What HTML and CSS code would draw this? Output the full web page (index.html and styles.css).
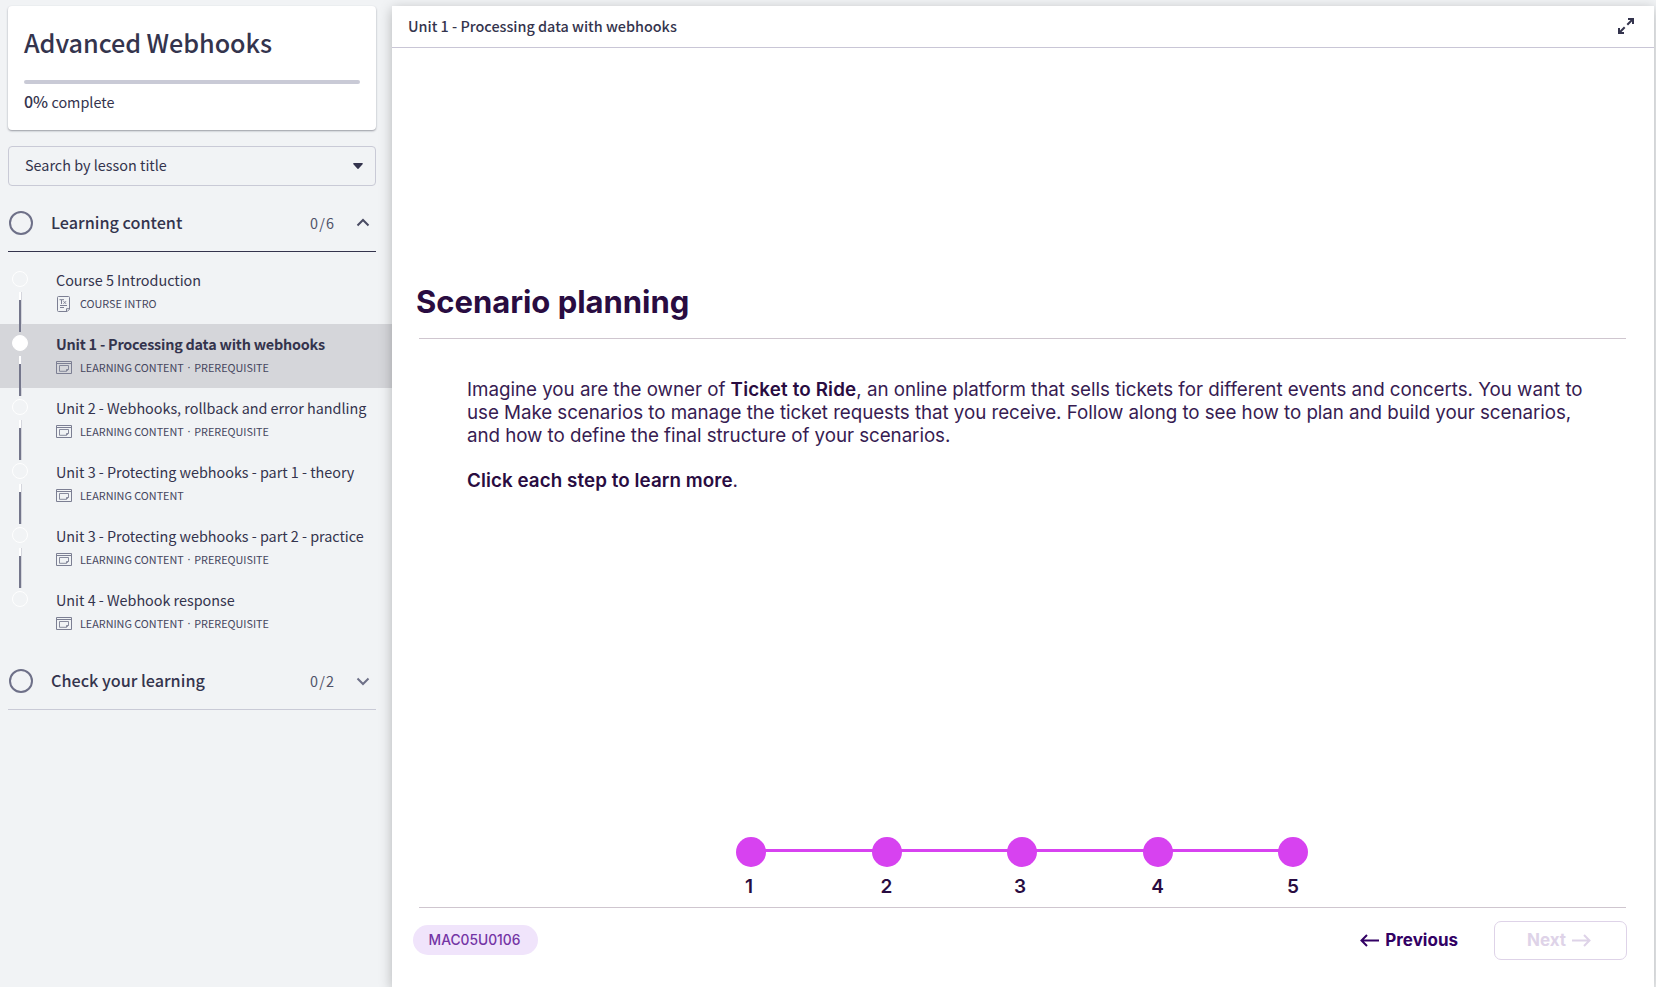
FILE: index.html
```html
<!DOCTYPE html>
<html lang="en">
<head>
<meta charset="utf-8">
<title>Advanced Webhooks</title>
<link rel="stylesheet" href="styles.css">
</head>
<body>
<svg class="defs" width="0" height="0" aria-hidden="true">
  <symbol id="lesson" viewBox="0 0 16 13"><g fill="none" stroke="#7c7f93"><path d="M.5.5h15v12H.5zM.5 2.500h15"/><path d="M3.500 4.500h9v3.800l-2 2h-7zM12.500 8.500h-2v1.800" stroke-width=".9"/></g></symbol>
  <symbol id="intro" viewBox="0 0 13 16"><g fill="none" stroke="#7c7f93"><path d="M1.500.5h10a1 1 0 0 1 1 1v11.700l-2.300 2.300h-8.700a1 1 0 0 1-1-1v-13a1 1 0 0 1 1-1zM9.500 15v-2.300h3M3 9.500h7M3 11.500h4"/><path d="M2.500 3.700H7M4.500 4v4M6.500 5.200l2.500 2.600M9 5.200L6.500 7.800"/></g></symbol>
</svg>
<div class="app">
  <aside class="sidebar">
    <section class="course">
      <h1>Advanced Webhooks</h1>
      <div class="progress"></div>
      <p><b>0%</b> <span>complete</span></p>
    </section>
    <div class="search"><span>Search by lesson title</span><svg width="10" height="6" viewBox="0 0 10 6"><path d="M.9 0h8.200c.7 0 1 .8.500 1.300L5.500 5.700a.7.7 0 0 1-1 0L.4 1.300C-.1.8.200 0 .9 0z" fill="#34344d"/></svg></div>
    <div class="group open">
      <i class="ring"></i><h2>Learning content</h2><span class="count">0/6</span>
      <svg width="14" height="14" viewBox="0 0 14 14"><path d="M1.500 9.500L7 4l5.500 5.500"/></svg>
    </div>
    <ul class="lessons">
      <li><i class="dot"></i><i class="line"></i><div><h3>Course 5 Introduction</h3><p><svg width="16" height="16"><use href="#intro" x="1" width="13" height="16"/></svg><span>COURSE INTRO</span></p></div></li>
      <li class="active"><i class="dot"></i><i class="line"></i><div><h3>Unit 1 - Processing data with webhooks</h3><p><svg width="16" height="13"><use href="#lesson"/></svg><span>LEARNING CONTENT</span><em>·</em><span>PREREQUISITE</span></p></div></li>
      <li><i class="dot"></i><i class="line"></i><div><h3>Unit 2 - Webhooks, rollback and error handling</h3><p><svg width="16" height="13"><use href="#lesson"/></svg><span>LEARNING CONTENT</span><em>·</em><span>PREREQUISITE</span></p></div></li>
      <li><i class="dot"></i><i class="line"></i><div><h3>Unit 3 - Protecting webhooks - part 1 - theory</h3><p><svg width="16" height="13"><use href="#lesson"/></svg><span>LEARNING CONTENT</span></p></div></li>
      <li><i class="dot"></i><i class="line"></i><div><h3>Unit 3 - Protecting webhooks - part 2 - practice</h3><p><svg width="16" height="13"><use href="#lesson"/></svg><span>LEARNING CONTENT</span><em>·</em><span>PREREQUISITE</span></p></div></li>
      <li><i class="dot"></i><div><h3>Unit 4 - Webhook response</h3><p><svg width="16" height="13"><use href="#lesson"/></svg><span>LEARNING CONTENT</span><em>·</em><span>PREREQUISITE</span></p></div></li>
    </ul>
    <div class="group">
      <i class="ring"></i><h2>Check your learning</h2><span class="count">0/2</span>
      <svg width="14" height="14" viewBox="0 0 14 14"><path d="M1.500 4.500L7 10l5.500-5.500"/></svg>
    </div>
  </aside>
  <main class="viewer">
    <header><span>Unit 1 - Processing data with webhooks</span>
      <svg width="16" height="16" viewBox="0 0 16 16" fill="none" stroke="#34344d" stroke-width="2"><path d="M10 1h5v5M15 1L9.300 6.700M1 10v5h5M1 15l5.700-5.700"/></svg>
    </header>
    <article>
      <h2>Scenario planning</h2>
      <div class="copy">
        <p>Imagine you are the owner of <b class="brand">Ticket to Ride</b>, an online platform that sells tickets for different events and concerts. You want to<br><span class="tight">use Make scenarios to manage the ticket requests that you receive. Follow along to see how to plan and build your scenarios,<br>and how to define the final structure of your scenarios.</span></p>
        <p><b>Click each step to learn more</b>.</p>
      </div>
      <ol class="steps"><li><span>1</span></li><li>2</li><li><span>3</span></li><li>4</li><li>5</li></ol>
      <footer>
        <span class="code">MAC05U0106</span>
        <button class="prev"><svg width="19" height="13" viewBox="0 0 19 13"><path d="M19 6.500H1.500M7 1L1.500 6.500 7 12"/></svg><span>Previous</span></button>
        <button class="next"><span>Next</span><svg width="19" height="13" viewBox="0 0 19 13"><path d="M0 6.500h17.500M12 1l5.500 5.500L12 12"/></svg></button>
      </footer>
    </article>
  </main>
</div>
</body>
</html>
```
FILE: styles.css
```css
* { box-sizing: border-box; margin: 0; padding: 0; }
body { height: 987px; overflow: hidden; background: #f1f3f5; color: #34344d; font: 14.4px/20px "Noto Sans CJK SC", "Noto Sans", sans-serif; }
.defs { position: absolute; }
.app { display: flex; height: 987px; padding: 6px 2px 0 0; }
.sidebar { width: 392px; flex: none; }
.course { width: 368px; height: 124px; margin-left: 8px; padding: 18px 16px 0; background: #fff; border-radius: 4px; box-shadow: 0 1px 2px rgba(40,42,60,.45); white-space: nowrap; }
.course h1 { font-size: 25.200px; line-height: 36px; font-weight: 500; letter-spacing: -.05px; }
.progress { height: 4px; margin-top: 20px; border-radius: 2px; background: #c9cad6; }
.course p { margin-top: 6px; line-height: 22px; }
.course b { font-weight: 500; font-size: 16px; }
.search { display: flex; align-items: center; justify-content: space-between; width: 368px; height: 40px; margin: 16px 0 0 8px; padding: 0 12px 0 16px; border: 1px solid #c9cad6; border-radius: 4px; }
.search span { padding-bottom: 2px; }
.group { display: flex; align-items: center; width: 368px; height: 66px; margin-left: 8px; padding: 8px 6px 0 1px; border-bottom: 1px solid #c9cad6; }
.group.open { border-color: #34344d; padding: 16px 6px 8px 1px; }
.ring { width: 24px; height: 24px; border: 2px solid #6e7088; border-radius: 50%; }
.group h2 { flex: 1; margin-left: 18px; padding-bottom: 2px; font-size: 16.200px; line-height: 24px; font-weight: 500; white-space: nowrap; }
.count { margin-right: 21px; color: #505268; letter-spacing: 1.100px; }
.group svg path { fill: none; stroke: #6e7088; stroke-width: 2; }
.group.open svg path { stroke: #4a4b63; }
.lessons { list-style: none; padding-top: 8px; }
.lessons li { position: relative; height: 64px; padding: 9px 0 0 56px; white-space: nowrap; }
.active { background: #d5d6da; }
.lessons h3 { font-size: 14.400px; line-height: 22px; font-weight: 400; letter-spacing: -.025px; }
.lessons .active h3 { font-weight: 700; letter-spacing: -.22px; }
.lessons p { display: flex; align-items: center; height: 24px; font-size: 10.800px; color: #45465e; }
.lessons p svg { margin: 1px 8px 0 0; }
.lessons em { width: 10.500px; text-align: center; font-style: normal; font-family: "Noto Sans", sans-serif; }
.dot { position: absolute; left: 12px; top: 11px; width: 16px; height: 16px; border: 1px solid #fff; border-radius: 50%; }
.active .dot { background: #fff; }
.line { position: absolute; z-index: 1; left: 19px; top: 32px; width: 3px; height: 40px; background: linear-gradient(#fff 8px, #74768b 8px); border-right: 1px solid #d5d6dd; }
.viewer { position: relative; flex: 1; display: flex; flex-direction: column; background: #fff; box-shadow: 0 3px 12px rgba(0,0,0,.26); }
.viewer header { display: flex; justify-content: space-between; align-items: center; height: 42px; padding: 0 20px 2px 16px; border-bottom: 1px solid #c9c6d6; font-weight: 500; }
article { flex: 1; padding: 236px 28px 0 23px; font-family: Inter, "Liberation Sans", sans-serif; color: #290c41; }
article h2 { height: 54px; margin-left: 1px; font-size: 31px; line-height: 36px; font-weight: 700; letter-spacing: -.03px; }
.copy { height: 499px; margin-left: 4px; padding: 40px 0 0 48px; border-top: 1px solid #cfc6cf; color: #371c52; font-size: 18.800px; line-height: 22.800px; letter-spacing: -.03px; white-space: nowrap; }
.copy b { color: #290c41; font-weight: 600; letter-spacing: .07px; }
.copy .brand { letter-spacing: .15px; }
.tight { letter-spacing: -.06px; }
.copy p + p { margin-top: 23px; }
.steps { display: flex; }
footer { display: flex; align-items: center; }
.steps { position: relative; justify-content: space-between; height: 70px; width: 572px; margin-left: 321px; list-style: none; font-weight: 600; font-size: 19px; }
.steps::before { content: ""; position: absolute; left: 15px; right: 15px; top: 12px; height: 3px; background: #d742f0; }
.steps li { position: relative; width: 30px; text-align: center; line-height: 39px; }
.steps li span { margin-right: 4px; }
.steps li::before { content: ""; display: block; width: 30px; height: 30px; border-radius: 50%; background: #d742f0; }
footer { height: 66px; margin-left: 4px; border-top: 1px solid #cfc6cf; }
.code { width: 125px; height: 30px; margin: 0 0 1px -6px; padding-right: 2px; border-radius: 15px; background: #f0e4fb; color: #7434a5; font-size: 13.800px; line-height: 30px; font-weight: 500; text-align: center; }
button { display: flex; align-items: center; font: 600 17px/24px Inter, sans-serif; background: none; border: 0; color: #320064; }
button svg { fill: none; stroke: currentColor; stroke-width: 2; }
.prev { margin: 0 0 1px auto; gap: 6px; font-weight: 700; }
.next { justify-content: center; gap: 6px; width: 133px; height: 39px; margin: 0 -1px 0 36px; padding: 0 3px 1px 0; border: 1px solid #ded3e8; border-radius: 7px; color: #ded3e8; font-weight: 700; }
```
